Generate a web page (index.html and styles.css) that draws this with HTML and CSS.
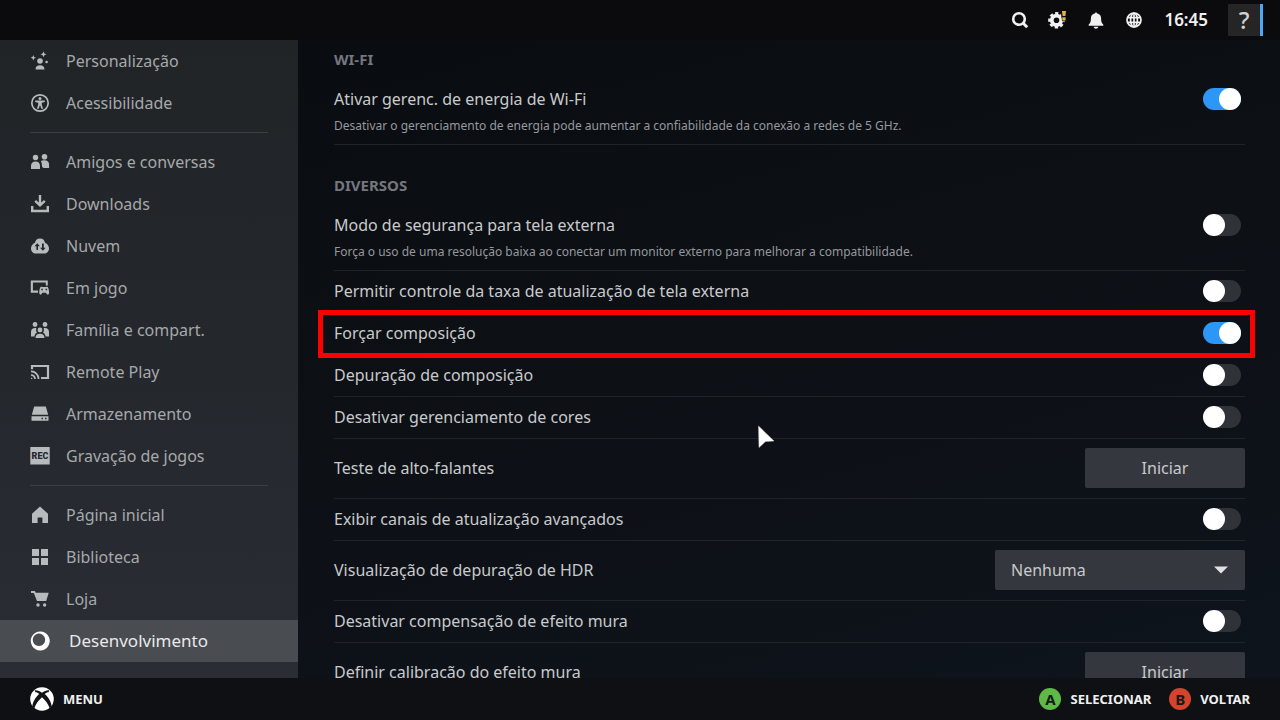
FILE: index.html
```html
<!DOCTYPE html>
<html lang="pt-BR">
<head>
<meta charset="utf-8">
<meta name="viewport" content="width=device-width, initial-scale=1">
<title>Configurações</title>
<link rel="stylesheet" href="styles.css">
</head>
<body>
<div class="app">
  <header class="topbar">
    <button class="top-button" type="button" aria-label="Pesquisar">
      <svg viewBox="0 0 20 20" width="20" height="20"><circle cx="9" cy="9" r="5.8" fill="none" stroke="currentColor" stroke-width="2.6"/><path d="M13 13 17.2 17.2" stroke="currentColor" stroke-width="3"/></svg>
    </button>
    <button class="top-button" type="button" aria-label="Configurações">
      <svg viewBox="0 0 20 20" width="20" height="20"><g fill="none" stroke="currentColor"><circle cx="8.5" cy="10.3" r="4.7" stroke-width="3.8"/><circle cx="8.5" cy="10.3" r="7" stroke-width="2.6" stroke-dasharray="3.2 2.298" stroke-dashoffset="1.6"/></g><path d="M13.2 0H19v11.200h-4.800L13.2 6Z" fill="#0b0b0d"/><path d="M14 1h4l-.6 5h-2.8ZM14.3 7.2h3.3v3.2h-3.3Z" fill="#eab43a"/></svg>
    </button>
    <button class="top-button" type="button" aria-label="Notificações">
      <svg viewBox="0 0 20 20" width="20" height="20"><path d="M9.2 2.5h1.6v.8c2.9.5 4.3 2.5 4.3 5.2 0 3.4.7 4.700 2.200 6v1.300H2.700v-1.300c1.500-1.300 2.200-2.600 2.200-6 0-2.700 1.400-4.700 4.300-5.200ZM7.600 16.800h4.800c-.4 1.300-1.300 1.900-2.400 1.900s-2-.6-2.400-1.900Z" fill="currentColor"/></svg>
    </button>
    <button class="top-button" type="button" aria-label="Rede">
      <svg viewBox="0 0 20 20" width="20" height="20" fill="none" stroke="currentColor" stroke-width="1.7"><circle cx="10" cy="10" r="7"/><ellipse cx="10" cy="10" rx="3.4" ry="7"/><path d="M3.6 7.6h12.800M3.600 12.400h12.800M10 3v14"/></svg>
    </button>
    <time class="clock">16:45</time>
    <button class="help" type="button">?</button>
  </header>

  <div class="body">
    <nav class="sidebar">
      <a class="nav-item" href="#"><svg class="nav-icon" viewBox="0 0 20 20"><circle cx="10" cy="10" r="2.800"/><path d="M5.500 18.500c0-3 1.800-4.300 4.500-4.300s4.500 1.300 4.500 4.300ZM13.500.300l.9 2.100 2.100.9-2.100.9-.9 2.100-.9-2.100-2.100-.9 2.100-.9ZM3.300 4l.8 1.900 1.900.8-1.900.8-.8 1.900-.8-1.900-1.900-.8 1.900-.8Z"/><circle cx="16.600" cy="11" r="1.300"/></svg>Personalização</a>
      <a class="nav-item" href="#"><svg class="nav-icon" viewBox="0 0 20 20"><circle cx="10" cy="10" r="8.200" fill="none" stroke="currentColor" stroke-width="1.700"/><circle cx="10" cy="5.600" r="1.500"/><path d="M5.200 7.500h9.600v1.600l-3 .6v2l1.300 4.100h-1.800L10.200 12.500h-.4l-1.100 3.300H6.900l1.300-4.100v-2l-3-.6Z"/></svg>Acessibilidade</a>
      <hr class="divider">
      <a class="nav-item" href="#"><svg class="nav-icon" viewBox="0 0 20 20"><circle cx="5.500" cy="5.500" r="2.700"/><circle cx="14.500" cy="4.700" r="2.800"/><path d="M1 17v-3c0-3 1.700-4.500 4.600-4.500s4.400 1.500 4.400 4.500v3ZM10.800 9.200c.9-.7 2.200-.9 3.700-.9 3 0 4.600 1.500 4.600 4.500V16h-5.600c-.6-.5-1.600-1-1.600-2.500 0-1.600 0-3-1.100-4.300Z"/></svg>Amigos e conversas</a>
      <a class="nav-item" href="#"><svg class="nav-icon" viewBox="0 0 20 20" fill="none" stroke="currentColor" stroke-width="2.400"><path d="M10 1v10M5.200 6.800 10 11.300l4.800-4.500M2.200 12v5h15.600v-5"/></svg>Downloads</a>
      <a class="nav-item" href="#"><svg class="nav-icon" viewBox="0 0 20 20"><path fill-rule="evenodd" d="M10 2.400c3.200 0 4.700 2 5 4.400 2.700 1.300 4 3.400 4 5.600 0 2.900-2 5-5 5H6c-3 0-5-2.100-5-5 0-2.200 1.300-4.300 4-5.600.3-2.400 1.800-4.400 5-4.400ZM7.200 7.200 4.500 10.300h1.900V14H8v-3.700h1.900ZM12 7.500v4.200h-1.900l2.800 3 2.800-3h-1.900V7.500Z"/></svg>Nuvem</a>
      <a class="nav-item" href="#"><svg class="nav-icon" viewBox="0 0 20 20"><path d="M.8 2.500h17v5h-2V4.400H2.900v8.200H8v2.200H.800Z"/><path fill-rule="evenodd" d="M10.500 9c1-.6 1.800-.3 2.400.1h2.500c.6-.4 1.400-.7 2.400-.1 1 1.900 1.500 4.500 1.200 6.600-.6 1.800-2.100 1.200-3-.9h-3.700c-.9 2.100-2.400 2.700-3 .9-.3-2.100.2-4.700 1.200-6.600ZM11.300 10.800v1.500h1.500v-1.500ZM15.600 10.800v1.500h1.500v-1.500Z"/></svg>Em jogo</a>
      <a class="nav-item" href="#"><svg class="nav-icon" viewBox="0 0 20 20"><circle cx="5" cy="4.500" r="2.400"/><circle cx="15" cy="4.500" r="2.400"/><circle cx="10" cy="10" r="2.400"/><path d="M5.500 18c0-2.700 1.600-4.200 4.500-4.200s4.500 1.500 4.500 4.200ZM1 16.500V12c0-2.500 1.700-3.900 4-3.900h1.300c-.4 2.300-.2 3.800.7 4.500-1.500 1-2.500 2.500-2.500 3.900ZM19 16.500V12c0-2.500-1.700-3.900-4-3.900h-1.300c.4 2.300.2 3.800-.7 4.500 1.500 1 2.500 2.500 2.500 3.900Z"/></svg>Família e compart.</a>
      <a class="nav-item" href="#"><svg class="nav-icon" viewBox="0 0 20 20" fill="none" stroke="currentColor"><path d="M2 7.200V4h16v12h-7" stroke-width="2.200"/><path d="M1 9.300a7.600 7.600 0 0 1 7.600 7.600M1 13a4 4 0 0 1 4 4" stroke-width="1.700"/><path d="M1 15.200 2.800 17H1Z" fill="currentColor" stroke="none"/></svg>Remote Play</a>
      <a class="nav-item" href="#"><svg class="nav-icon" viewBox="0 0 20 20"><path fill-rule="evenodd" d="M4.200 2.500h11.600l2.400 8.200H1.800ZM1.500 12.300h17v4.500h-17ZM11.500 13.800v1.500H13v-1.500ZM15 13.800v1.500h1.500v-1.500Z"/></svg>Armazenamento</a>
      <a class="nav-item" href="#"><svg class="nav-icon" viewBox="0 0 20 20"><path d="M.300 1h19.400v17.500H.300Z"/><text class="rec" x="10" y="13" text-anchor="middle">REC</text></svg>Gravação de jogos</a>
      <hr class="divider">
      <a class="nav-item" href="#"><svg class="nav-icon" viewBox="0 0 20 20"><path d="M10 1.500 18 8.700V18h-5.600v-5.600H7.600V18H2V8.700Z"/></svg>Página inicial</a>
      <a class="nav-item" href="#"><svg class="nav-icon" viewBox="0 0 20 20"><path d="M2 2h7v7H2ZM11 2h7v7h-7ZM2 11h7v7H2ZM11 11h7v7h-7Z"/></svg>Biblioteca</a>
      <a class="nav-item" href="#"><svg class="nav-icon" viewBox="0 0 20 20"><path d="M1 2h3.900l.8 1.700h13L16.200 12H7L3.800 3.900H1Z"/><circle cx="8" cy="16" r="1.700"/><circle cx="14.600" cy="16" r="1.700"/></svg>Loja</a>
      <a class="nav-item active" href="#" aria-current="page"><svg class="nav-icon" viewBox="0 0 20 20"><path fill-rule="evenodd" d="M10.200.500a9.500 9.500 0 1 0 .100 0ZM9 2.600a6.200 6.200 0 1 1-.100 0Z"/></svg>Desenvolvimento</a>
    </nav>

    <main class="content">
      <h2 class="heading">WI-FI</h2>
      <div class="row"><label for="wifi"><span class="name">Ativar gerenc. de energia de Wi-Fi</span><span class="hint">Desativar o gerenciamento de energia pode aumentar a confiabilidade da conexão a redes de 5 GHz.</span></label><input class="toggle" type="checkbox" id="wifi" checked></div>
      <h2 class="heading later">DIVERSOS</h2>
      <div class="row"><label for="safe"><span class="name">Modo de segurança para tela externa</span><span class="hint">Força o uso de uma resolução baixa ao conectar um monitor externo para melhorar a compatibilidade.</span></label><input class="toggle" type="checkbox" id="safe"></div>
      <div class="row"><label for="rate"><span class="name">Permitir controle da taxa de atualização de tela externa</span></label><input class="toggle" type="checkbox" id="rate"></div>
      <div class="row highlighted"><label for="force"><span class="name">Forçar composição</span></label><input class="toggle" type="checkbox" id="force" checked></div>
      <div class="row"><label for="debug"><span class="name">Depuração de composição</span></label><input class="toggle" type="checkbox" id="debug"></div>
      <div class="row"><label for="color"><span class="name">Desativar gerenciamento de cores</span></label><input class="toggle" type="checkbox" id="color"></div>
      <div class="row tall"><span class="name" id="speakers">Teste de alto-falantes</span><button class="action" type="button" aria-describedby="speakers">Iniciar</button></div>
      <div class="row"><label for="channels"><span class="name">Exibir canais de atualização avançados</span></label><input class="toggle" type="checkbox" id="channels"></div>
      <div class="row tall"><label for="hdr"><span class="name">Visualização de depuração de HDR</span></label><span class="dropdown"><select id="hdr"><option>Nenhuma</option></select><svg class="arrow" viewBox="0 0 14 8" width="14" height="8"><path d="M0 .500h14L7 7.500Z" fill="currentColor"/></svg></span></div>
      <div class="row"><label for="mura"><span class="name">Desativar compensação de efeito mura</span></label><input class="toggle" type="checkbox" id="mura"></div>
      <div class="row tall"><span class="name" id="calibration">Definir calibração do efeito mura</span><button class="action" type="button" aria-describedby="calibration">Iniciar</button></div>
    </main>
  </div>

  <footer class="footer">
    <button class="hint-button menu" type="button"><svg viewBox="0 0 24 24" width="24" height="24"><circle cx="12" cy="12" r="11.800" fill="#fff"/><path d="M4.700 3.200C7.200 2.800 9.800 4.200 12 5.700 14.200 4.200 16.800 2.800 19.300 3.200L18.600 5.300c-1.200-.1-2.700.6-3.800 1.700C18.500 10.500 21.500 15 21.600 19.500L19.700 21.300C18.300 17 15.500 13.500 12 10.300 8.500 13.500 5.700 17 4.300 21.300L2.400 19.500C2.500 15 5.500 10.500 9.200 7 8.100 5.900 6.600 5.200 5.400 5.300Z" fill="#111316"/></svg>MENU</button>
    <button class="hint-button" type="button"><span class="key green">A</span>SELECIONAR</button>
    <button class="hint-button" type="button"><span class="key red">B</span>VOLTAR</button>
  </footer>
  <svg class="cursor" viewBox="0 0 17 24" width="17" height="24"><path d="M.500 1 16 16 7.500 16.600 1 22.500Z" fill="#fff" stroke="#ccc" stroke-width=".500"/></svg>
</div>
</body>
</html>
```
FILE: styles.css
```css
* { box-sizing: border-box; }

body {
  margin: 0;
  background: #0b0e12;
  color: #c8cacc;
  font-family: "Noto Sans", "Open Sans", sans-serif;
  font-size: 16px;
  line-height: 22px;
}

button, select { font: inherit; color: inherit; border: 0; }
button { padding: 0; background: none; }

.app {
  position: relative;
  display: flex;
  flex-direction: column;
  height: 100vh;
  overflow: hidden;
}

.topbar {
  flex: none;
  display: flex;
  align-items: center;
  justify-content: flex-end;
  gap: 18px;
  height: 40px;
  padding-right: 17px;
  background: #0b0b0d;
  color: #f0f0f0;
}

.top-button { display: flex; }

.clock {
  margin-left: 2px;
  font-weight: 600;
  font-size: 17px;
}

.help {
  width: 35px;
  height: 32px;
  margin-left: 2px;
  background: #252525;
  border-right: 3px solid #4aa8f5;
  color: #d0d0d0;
  font-size: 24px;
  font-weight: 500;
}

.body {
  flex: 1;
  display: flex;
  min-height: 0;
}

.sidebar {
  flex: none;
  width: 298px;
  overflow: hidden;
  background: linear-gradient(#212427, #24272c 50%, #2a2d34);
}

.nav-item {
  display: flex;
  align-items: center;
  gap: 16px;
  height: 42px;
  padding-left: 30px;
  color: #a6a9ab;
  text-decoration: none;
}

.nav-icon {
  flex: none;
  width: 20px;
  height: 20px;
  color: #b8bbbd;
}

.nav-icon:not([fill]) { fill: currentColor; }

.rec {
  fill: #24272d;
  font-family: Roboto, sans-serif;
  font-size: 9px;
  font-weight: 900;
}

.divider {
  height: 1px;
  margin: 8px 30px;
  border: 0;
  background: #3b3f44;
}

.active {
  gap: 19px;
  background: #494c50;
  color: #e8e9ea;
  font-size: 17px;
}

.active .nav-icon { color: #fff; }

.content {
  flex: 1;
  min-width: 0;
  padding: 8px 35px 0 36px;
  overflow: hidden;
  background: linear-gradient(165deg, #090c10, #0d1015 45%, #0e141c);
}

.heading {
  margin: 0 0 9px;
  color: #74777e;
  font-size: 15px;
  font-weight: 700;
  line-height: 22px;
}

.later { margin-top: 29px; }

.row {
  position: relative;
  display: flex;
  justify-content: space-between;
  min-height: 42px;
  padding: 9px 0 8px;
  border-bottom: 1px solid #202328;
}

.row:has(.hint) { padding-bottom: 7px; }

.name { display: block; }

.hint {
  display: block;
  margin-top: 5px;
  color: #96999d;
  font-size: 12px;
}

.tall {
  align-items: center;
  min-height: 60px;
  padding: 9px 0 10px;
}

.highlighted::after {
  content: "";
  position: absolute;
  inset: -3px -10px -4px -16px;
  border: 5px solid #fe0000;
  pointer-events: none;
}

.toggle {
  appearance: none;
  flex: none;
  display: flex;
  width: 38px;
  height: 22px;
  margin: 0 4px;
  border-radius: 11px;
  background: #2f3237;
}

.toggle::before {
  content: "";
  width: 22px;
  height: 22px;
  border-radius: 50%;
  background: #fff;
}

.toggle:checked {
  justify-content: flex-end;
  background: #2d97f7;
}

.action, .dropdown select {
  height: 40px;
  border-radius: 2px;
  background: #34373d;
}

.action { width: 160px; }

.dropdown {
  position: relative;
  display: flex;
  width: 250px;
}

.dropdown select {
  appearance: none;
  width: 100%;
  padding: 0 16px;
}

.arrow {
  position: absolute;
  top: 16px;
  right: 17px;
  color: #e0e0e0;
  pointer-events: none;
}

.footer {
  flex: none;
  display: flex;
  align-items: center;
  gap: 18px;
  height: 42px;
  padding: 0 30px;
  background: #0f1013;
  color: #f0f0f0;
  font-size: 13px;
  font-weight: 700;
}

.hint-button {
  display: flex;
  align-items: center;
  gap: 9px;
}

.menu { margin-right: auto; }

.key {
  width: 22px;
  height: 22px;
  border-radius: 50%;
  color: #16191a;
  font-size: 15px;
}

.green { background: #5fb946; }
.red { background: #d4432b; }

.cursor {
  position: absolute;
  top: 425px;
  left: 758px;
  pointer-events: none;
}
```
